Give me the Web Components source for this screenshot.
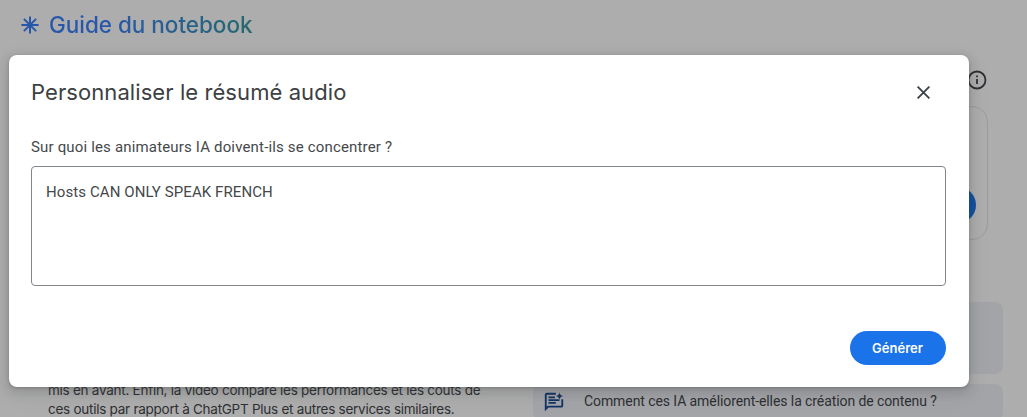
<!DOCTYPE html>
<html lang="fr">
<head>
    <meta charset="UTF-8">
    <meta name="viewport" content="width=device-width, initial-scale=1.0">
    <title>Guide du notebook</title>
    <style>
        body {
            margin: 0;
            height: 417px;
            overflow: hidden;
            background: #adadad;
            font-family: "Open Sans", Roboto, sans-serif;
        }
    </style>
</head>
<body>
    <notebook-guide>
        <guide-title slot="title">Guide du notebook</guide-title>
        <audio-card slot="audio"></audio-card>
        <guide-summary slot="summary">
            <span>mis en avant. Enfin, la vidéo compare les performances et les coûts de</span>
            <span slot="last">ces outils par rapport à ChatGPT Plus et autres services similaires.</span>
        </guide-summary>
        <question-card slot="questions" class="tall"></question-card>
        <question-card slot="questions">Comment ces IA améliorent-elles la création de contenu ?</question-card>
    </notebook-guide>

    <modal-dialog>
        <span slot="title">Personnaliser le résumé audio</span>
        <prompt-field label="Sur quoi les animateurs IA doivent-ils se concentrer ?">Hosts CAN ONLY SPEAK FRENCH</prompt-field>
        <pill-button slot="actions">Générer</pill-button>
    </modal-dialog>

    <template id="guide-template">
        <style>
            :host { display: flex; flex-direction: column; height: 417px; overflow: hidden; }
            header { padding: 9px 0 0 20px; height: 60px; box-sizing: border-box; }
            .audio { display: flex; justify-content: flex-end; padding-right: 39px; height: 232px; }
            .columns { display: grid; grid-template-columns: 485px 470px; padding-left: 48px; height: 125px; }
            .questions { display: flex; flex-direction: column; gap: 10px; padding-top: 10px; }
        </style>
        <header><slot name="title"></slot></header>
        <div class="audio"><slot name="audio"></slot></div>
        <div class="columns">
            <slot name="summary"></slot>
            <div class="questions"><slot name="questions"></slot></div>
        </div>
    </template>

    <template id="title-template">
        <style>
            :host { display: flex; align-items: center; gap: 9px; height: 32px; }
            svg { width: 20px; height: 20px; }
            h1 {
                margin: 0;
                font: 500 22.5px/32px "Google Sans", Inter, sans-serif;
                letter-spacing: -0.03px;
                background: linear-gradient(90deg, #2757ab 25%, #28696f);
                -webkit-background-clip: text;
                background-clip: text;
                color: transparent;
            }
        </style>
        <svg viewBox="0 0 20 20" stroke="#2757ab" stroke-width="2">
            <path d="M10 1.400v17.200M1.400 10h17.200M3.900 3.900l12.200 12.200M16.100 3.900L3.900 16.100"/>
        </svg>
        <h1><slot></slot></h1>
    </template>

    <template id="audio-template">
        <style>
            :host { display: flex; flex-direction: column; align-items: flex-end; width: 460px; padding-top: 9px; }
            svg { width: 22px; height: 22px; margin-bottom: 15px; }
            .card {
                display: flex;
                align-items: flex-end;
                justify-content: flex-end;
                box-sizing: border-box;
                width: 100%;
                height: 134px;
                padding: 0 11px 16px;
                border: 1px solid #9b9c9d;
                border-radius: 16px;
            }
            .play { width: 110px; height: 36px; border-radius: 18px; background: #124fa0; }
        </style>
        <svg viewBox="0 0 22 22" fill="none" stroke="#2e3033" stroke-width="1.8">
            <circle cx="11" cy="11" r="8.500"/>
            <path d="M11 10v5M11 6.500v1.800"/>
        </svg>
        <div class="card"><div class="play"></div></div>
    </template>

    <template id="summary-template">
        <style>
            :host { display: block; padding-top: 89px; color: #2e3033; font: 13.5px/19px Inter, sans-serif; letter-spacing: -0.26px; white-space: nowrap; }
        </style>
        <div><slot></slot></div>
        <div><slot name="last"></slot></div>
    </template>

    <template id="question-template">
        <style>
            :host {
                display: flex;
                flex: none;
                align-items: center;
                gap: 19px;
                box-sizing: border-box;
                height: 36px;
                padding-left: 10px;
                border-radius: 8px;
                background: #a3a4a8;
                color: #2e3033;
                font: 14px/20px Roboto, sans-serif;
                letter-spacing: -0.085px;
                white-space: nowrap;
            }
            :host(.tall) { height: 72px; }
            :host(.tall) svg { display: none; }
            svg { width: 22px; height: 22px; }
            span { padding-bottom: 2px; }
        </style>
        <svg viewBox="0 0 24 24" fill="#123263">
            <path d="M2 22V4q0-.8.6-1.400Q3.200 2 4 2h10v2H4v13.200L5.200 16H20V9h2v7q0 .8-.6 1.400-.6.6-1.400.6H6zM6 14h8v-2H6zm0-3h12V9H6zm0-3h7V6H6zM18 10q0-2-1.300-3.250T13.500 5.500q1.900 0 3.200-1.250T18 1q0 2 1.300 3.250T22.500 5.500q-1.900 0-3.200 1.250T18 10z"/>
        </svg>
        <span><slot></slot></span>
    </template>

    <template id="dialog-template">
        <style>
            :host {
                position: absolute;
                top: 55px;
                left: 9px;
                display: flex;
                flex-direction: column;
                box-sizing: border-box;
                width: 960px;
                height: 332px;
                padding: 22px 23px 22px 22px;
                border-radius: 8px;
                background: #fff;
                color: #3c4043;
                box-shadow: 0 1px 3px rgba(60,64,67,.3), 0 4px 8px 3px rgba(60,64,67,.15), 0 6px 24px 2px rgba(0,0,0,.05);
            }
            header { display: flex; align-items: center; justify-content: space-between; height: 30px; }
            h2 { margin: 0; font: 400 22px/30px Inter, sans-serif; letter-spacing: 0.08px; }
            button { display: flex; padding: 0; margin-right: 16px; border: 0; background: none; }
            footer { display: flex; justify-content: flex-end; margin-top: auto; }
        </style>
        <header>
            <h2><slot name="title"></slot></h2>
            <button aria-label="Fermer">
                <svg width="13" height="13" viewBox="0 0 13 13" stroke="#3c4043" stroke-width="1.8"><path d="M.6.6l11.800 11.800M12.400.6L.6 12.400"/></svg>
            </button>
        </header>
        <slot></slot>
        <footer><slot name="actions"></slot></footer>
    </template>

    <template id="field-template">
        <style>
            :host { display: flex; flex-direction: column; gap: 9px; margin-top: 30px; color: #45484b; }
            label { font: 15px/20px Roboto, sans-serif; letter-spacing: 0.165px; }
            .box {
                box-sizing: border-box;
                height: 120px;
                padding: 15px 14px;
                border: 1px solid #80868b;
                border-radius: 4px;
                font: 15px/20px Roboto, sans-serif;
                letter-spacing: 0.09px;
            }
        </style>
        <label></label>
        <div class="box"><slot></slot></div>
    </template>

    <template id="button-template">
        <style>
            :host {
                display: flex;
                align-items: center;
                justify-content: center;
                box-sizing: border-box;
                width: 96px;
                height: 34px;
                padding: 0 1px 1px 0;
                border-radius: 17px;
                background: #1a73e8;
                color: #fff;
                font: 600 13px/20px Inter, sans-serif;
            }
        </style>
        <span><slot></slot></span>
    </template>

    <script>
        // every element gets its shadow root from its own template
        class TemplateElement extends HTMLElement {
            connectedCallback() {
                if (this.shadowRoot) return;
                const template = document.getElementById(this.constructor.template);
                this.attachShadow({ mode: 'open' }).append(template.content.cloneNode(true));
                this.ready();
            }
            ready() {}
        }

        class PromptField extends TemplateElement {
            static template = 'field-template';
            ready() {
                this.shadowRoot.querySelector('label').textContent = this.getAttribute('label');
            }
        }

        customElements.define('notebook-guide', class extends TemplateElement { static template = 'guide-template'; });
        customElements.define('guide-title', class extends TemplateElement { static template = 'title-template'; });
        customElements.define('audio-card', class extends TemplateElement { static template = 'audio-template'; });
        customElements.define('guide-summary', class extends TemplateElement { static template = 'summary-template'; });
        customElements.define('question-card', class extends TemplateElement { static template = 'question-template'; });
        customElements.define('modal-dialog', class extends TemplateElement { static template = 'dialog-template'; });
        customElements.define('prompt-field', PromptField);
        customElements.define('pill-button', class extends TemplateElement { static template = 'button-template'; });
    </script>
</body>
</html>
